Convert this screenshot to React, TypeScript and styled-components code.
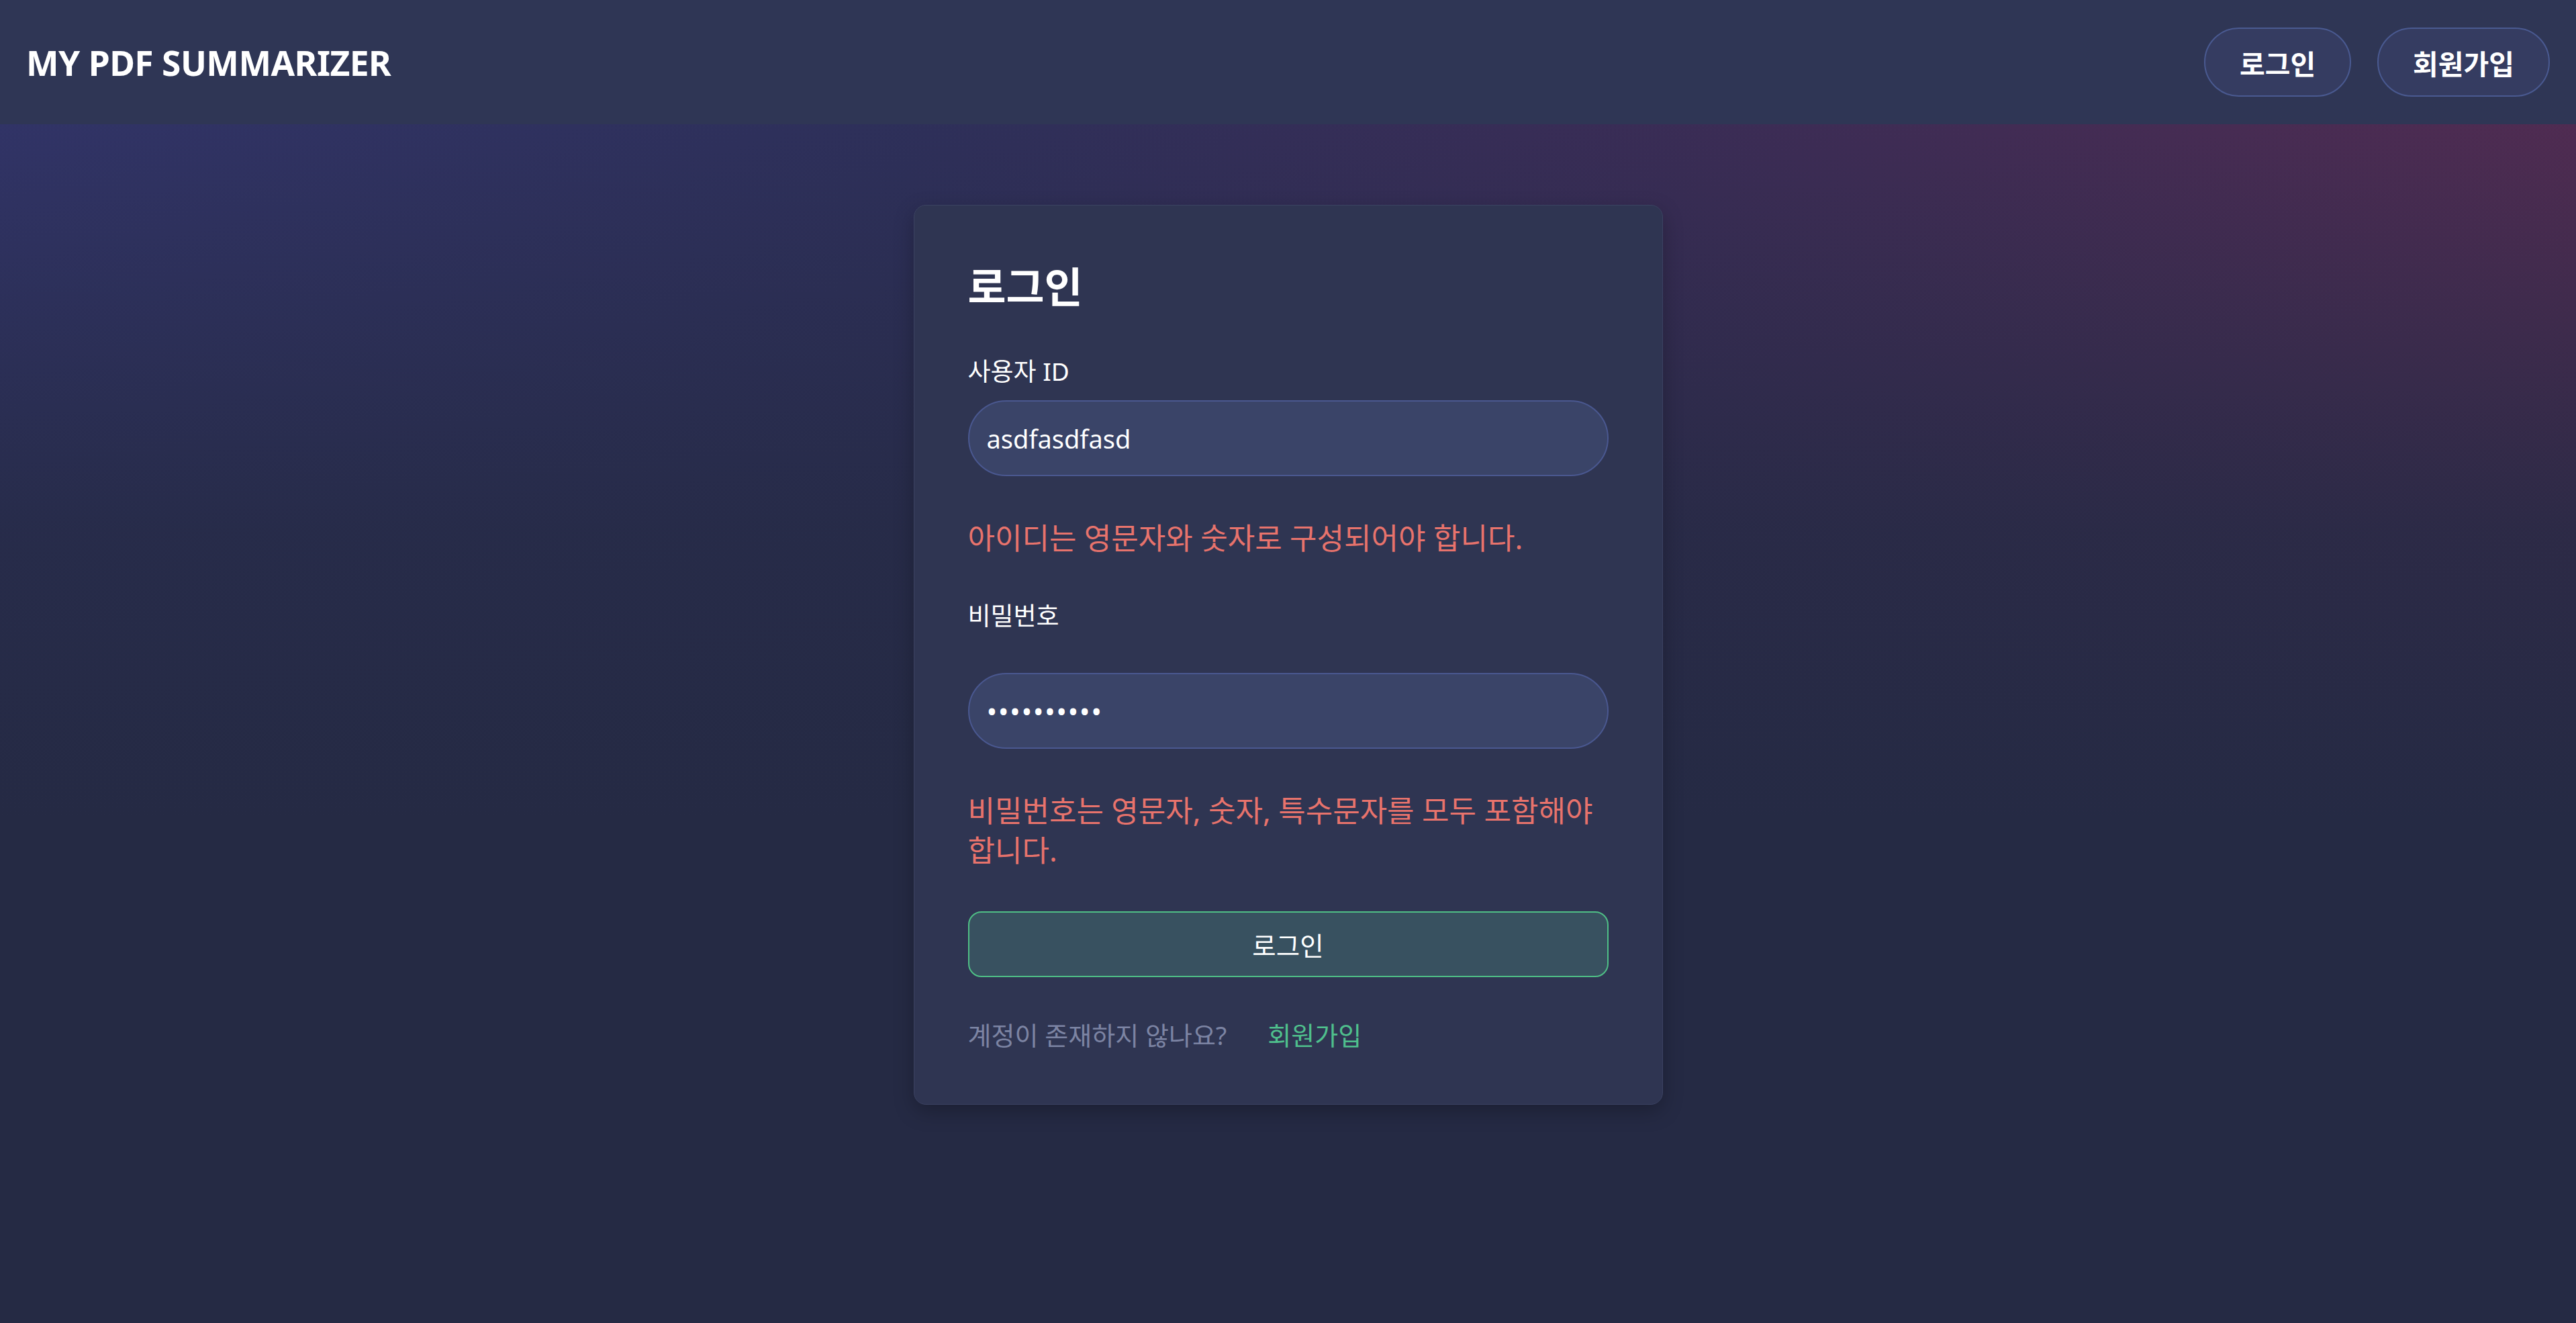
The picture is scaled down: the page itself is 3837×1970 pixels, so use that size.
import React from "react";
import styled, { createGlobalStyle } from "styled-components";

const GlobalStyle = createGlobalStyle`
  html, body {
    margin: 0;
    padding: 0;
  }
  body {
    font-family: "Noto Sans", "Noto Sans CJK KR", sans-serif;
    background: #252a44;
    color: #ffffff;
  }
  * { box-sizing: border-box; }
`;

const Page = styled.div`
  min-height: 100vh;
  display: flex;
  flex-direction: column;
  background:
    linear-gradient(180deg, rgba(37, 42, 68, 0) 0%, rgba(37, 42, 68, 0.85) 40%, #252a44 62%),
    linear-gradient(90deg, #34366f 0%, #30315f 35%, #3f2d5a 65%, #5a2c55 100%);
`;

const Header = styled.header`
  height: 185px;
  flex: 0 0 auto;
  display: flex;
  align-items: center;
  justify-content: space-between;
  padding: 0 39px;
  background: #2f3655;
`;

const Brand = styled.h1`
  margin: 0;
  font-size: 51.5px;
  font-weight: 700;
  letter-spacing: -0.5px;
  color: #ffffff;
`;

const Nav = styled.nav`
  display: flex;
  align-items: center;
  gap: 39px;
`;

const NavButton = styled.button`
  height: 103px;
  padding: 0 51px;
  border: 2px solid #4a5a91;
  border-radius: 999px;
  background: #353c61;
  color: #ffffff;
  font-family: "Noto Sans", "Noto Sans CJK KR", sans-serif;
  font-size: 41px;
  font-weight: 700;
  cursor: pointer;
`;

const Main = styled.main`
  flex: 1;
  display: flex;
  justify-content: center;
  align-items: flex-start;
  padding: 120px 0 0;
`;

const Card = styled.section`
  width: 1116px;
  padding: 86px 80px 78px;
  background: #2f3552;
  border: 1px solid #3b4262;
  border-radius: 18px;
  box-shadow: 0 10px 30px rgba(0, 0, 0, 0.25);
  display: flex;
  flex-direction: column;
`;

const Title = styled.h2`
  margin: 0 0 66px;
  font-size: 62px;
  line-height: 70px;
  font-weight: 700;
  color: #ffffff;
`;

const Label = styled.label<{ $gap: number }>`
  display: block;
  font-size: 37px;
  line-height: 50px;
  color: #ffffff;
  margin-bottom: ${(p) => p.$gap}px;
`;

const Input = styled.input<{ $dots?: boolean }>`
  display: block;
  width: 100%;
  height: 113px;
  padding: 0 26px;
  border: 2px solid #4a5890;
  border-radius: 999px;
  background: #3a4468;
  color: #ffffff;
  font-family: "Noto Sans", "Noto Sans CJK KR", sans-serif;
  font-size: ${(p) => (p.$dots ? 42 : 38)}px;
  letter-spacing: ${(p) => (p.$dots ? 1.5 : 0)}px;
  outline: none;
`;

const ErrorText = styled.p`
  margin: 63px 0 61px;
  font-size: 44px;
  line-height: 59px;
  color: #e8736c;
  word-break: keep-all;
`;

const SubmitButton = styled.button`
  width: 100%;
  height: 98px;
  border: 2px solid #4fbf86;
  border-radius: 20px;
  background: #385160;
  color: #ffffff;
  font-family: "Noto Sans", "Noto Sans CJK KR", sans-serif;
  font-size: 38.5px;
  cursor: pointer;
`;

const Footer = styled.div`
  margin-top: 61px;
  display: flex;
  align-items: center;
  gap: 61px;
  font-size: 38px;
  line-height: 50px;
`;

const Muted = styled.span`
  color: #7c84a3;
`;

const SignupLink = styled.a`
  color: #4fc08d;
  text-decoration: none;
  cursor: pointer;
`;

export default function App() {
  return (
    <>
      <GlobalStyle />
      <Page>
        <Header>
          <Brand>MY PDF SUMMARIZER</Brand>
          <Nav>
            <NavButton>로그인</NavButton>
            <NavButton>회원가입</NavButton>
          </Nav>
        </Header>
        <Main>
          <Card>
            <Title>로그인</Title>
            <Label $gap={18} htmlFor="uid">사용자 ID</Label>
            <Input id="uid" type="text" defaultValue="asdfasdfasd" />
            <ErrorText>아이디는 영문자와 숫자로 구성되어야 합니다.</ErrorText>
            <Label $gap={60} htmlFor="pw">비밀번호</Label>
            <Input id="pw" type="password" $dots defaultValue="asdfasdf12" />
            <ErrorText>비밀번호는 영문자, 숫자, 특수문자를 모두 포함해야 합니다.</ErrorText>
            <SubmitButton type="button">로그인</SubmitButton>
            <Footer>
              <Muted>계정이 존재하지 않나요?</Muted>
              <SignupLink>회원가입</SignupLink>
            </Footer>
          </Card>
        </Main>
      </Page>
    </>
  );
}
